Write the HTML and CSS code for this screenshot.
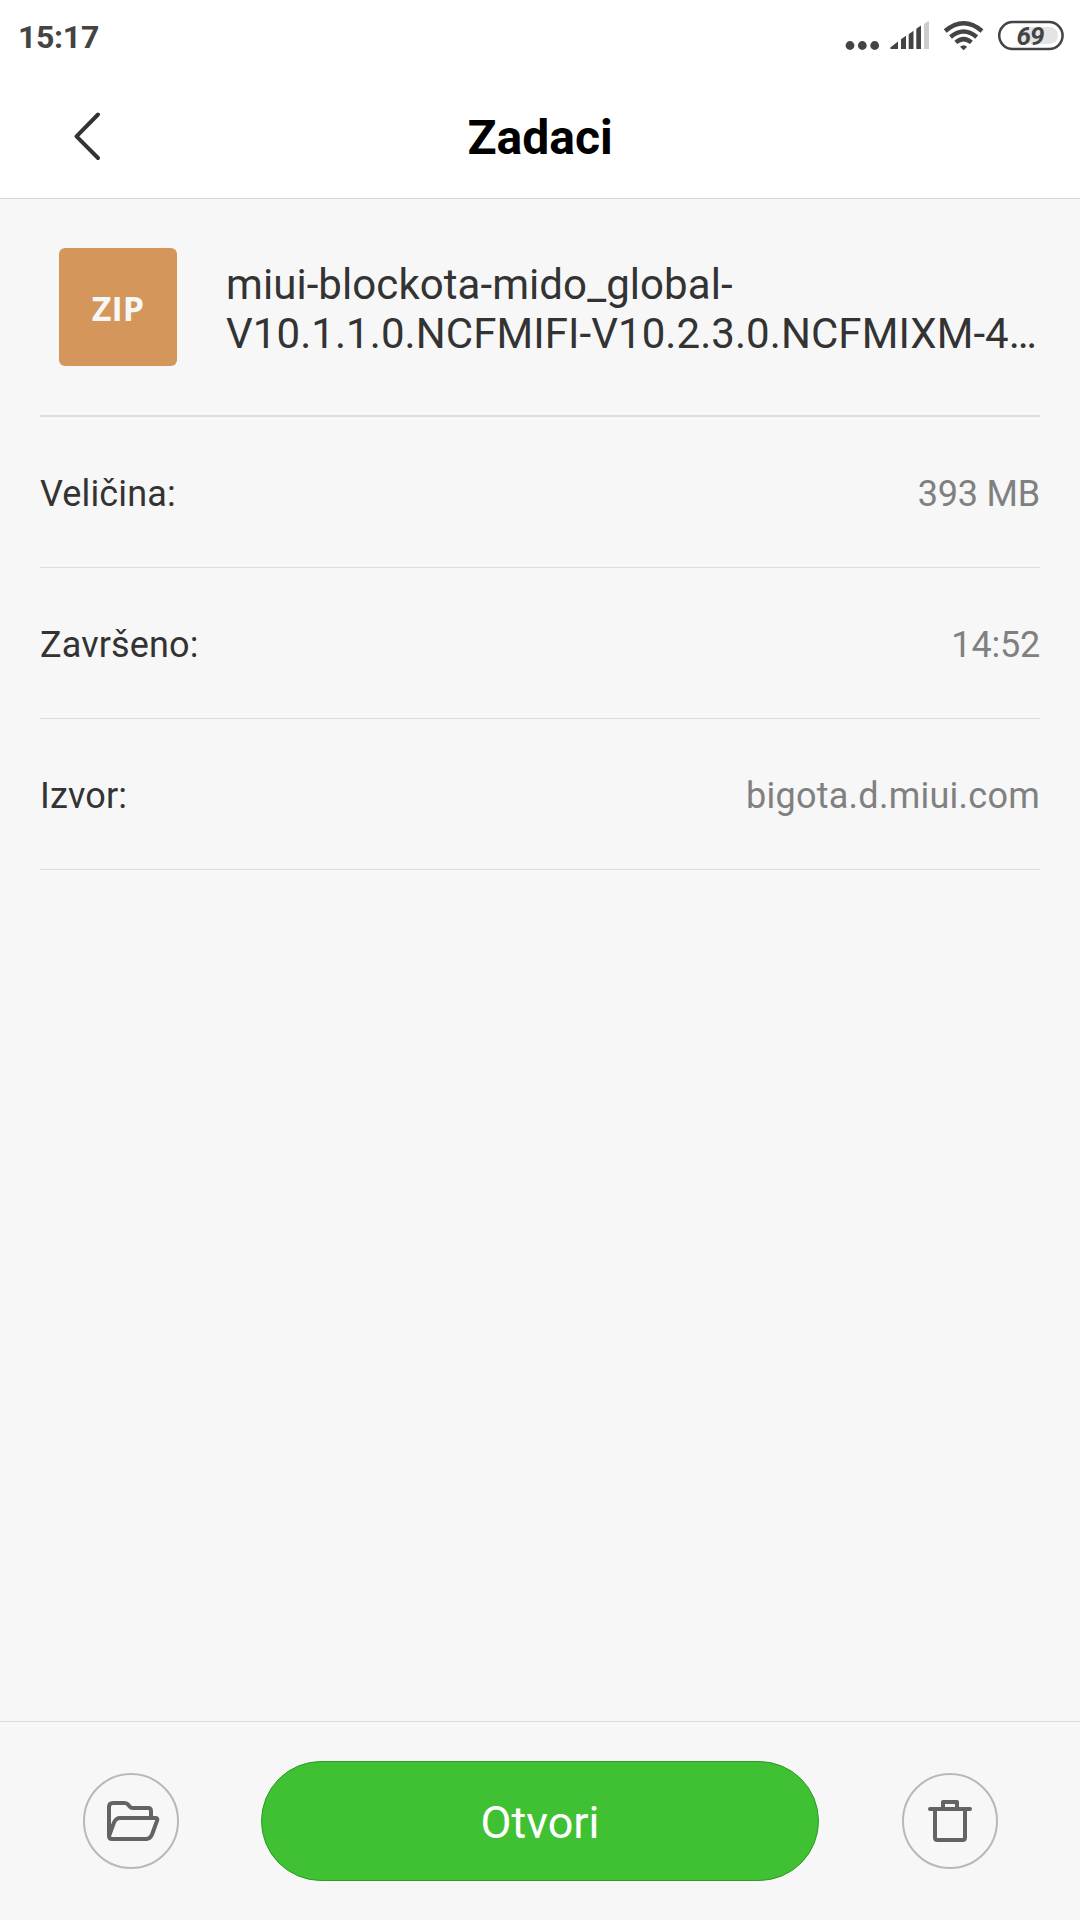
FILE: index.html
```
<!DOCTYPE html>
<html lang="bs">
<head>
    <meta charset="UTF-8">
    <meta name="viewport" content="width=device-width, initial-scale=1.0">
    <title>Zadaci</title>
    <link rel="stylesheet" href="styles.css">
</head>
<body>
    <!-- Status bar -->
    <div class="status-bar">
        <span class="clock">15:17</span>
        <svg class="status-icons" width="220" height="34" viewBox="845 18 220 34">
            <g fill="#444">
                <circle cx="850" cy="45.5" r="4.4"/>
                <circle cx="862.3" cy="45.5" r="4.4"/>
                <circle cx="874.7" cy="45.5" r="4.4"/>
                <path d="M890.3 47.5L898 41.5V49H891.2Q890 49 890.3 47.5z"/>
                <path d="M901 39.3L906 35.7V49H901z"/>
                <path d="M908.7 34.2L913.5 30.8V49H908.7z"/>
                <path d="M916.3 28.7L921 25.5V49H916.3z"/>
                <path fill="#ccc" d="M924 24L928 21.2Q929 21 929 22V49H924z"/>
                <path d="M960 46.8Q963.6 43.6 967.2 46.8L963.6 50.2z"/>
            </g>
            <g fill="none" stroke="#444" stroke-width="4.4">
                <path d="M945.2 31Q963.6 15.6 982 31"/>
                <path d="M950.5 37Q963.6 26 976.7 37"/>
                <path d="M955.8 42.4Q963.6 35.8 971.4 42.4"/>
            </g>
            <path fill="#e4e4e4" d="M1022 27H1049.5A8.5 8.5 0 0 1 1049.5 44H1022z"/>
            <rect x="999.2" y="22.1" width="63.4" height="27" rx="13.5" fill="none" stroke="#444" stroke-width="2.5"/>
            <text class="battery-level" x="1030" y="44.7" text-anchor="middle">69</text>
        </svg>
    </div>

    <header class="header">
        <a class="back" href="#">
            <svg width="28" height="50" viewBox="0 0 28 50">
                <path d="M24 3.5L2.5 25.3L24 47" fill="none" stroke="#333" stroke-width="4" stroke-linecap="round" stroke-linejoin="round"/>
            </svg>
        </a>
        <h1>Zadaci</h1>
    </header>

    <main class="content">
        <div class="file">
            <div class="file-icon">ZIP</div>
            <div class="file-name">miui-blockota-mido_global-<br>V10.1.1.0.NCFMIFI-V10.2.3.0.NCFMIXM-4…</div>
        </div>

        <div class="row">
            <span class="label">Veličina:</span>
            <span class="value">393 MB</span>
        </div>
        <div class="row">
            <span class="label">Završeno:</span>
            <span class="value">14:52</span>
        </div>
        <div class="row">
            <span class="label">Izvor:</span>
            <span class="value source">bigota.d.miui.com</span>
        </div>
    </main>

    <!-- Bottom actions -->
    <footer class="actions">
        <button class="btn-round">
            <svg width="50" height="46" viewBox="0 0 50 46">
                <g fill="none" stroke="#636363" stroke-width="4" stroke-linejoin="round">
                    <path d="M45 19V13Q45 10 42 10H27Q24.5 10 23.2 8L22.3 6.8Q21 5 18.5 5H7Q3 5 3 9V38"/>
                    <path d="M3 38L8 24.5Q10 20 14 20H49.5Q52 20 51.2 22.3L46 36.5Q44 41 40.5 41H6Q3 41 3 38z"/>
                </g>
            </svg>
        </button>
        <button class="btn-open">Otvori</button>
        <button class="btn-round">
            <svg width="44" height="46" viewBox="0 0 44 46">
                <g fill="none" stroke="#636363" stroke-width="4">
                    <path d="M2 11H42" stroke-linecap="round"/>
                    <path d="M15 10V4H29V10" stroke-linejoin="round"/>
                    <path d="M7 11V39.5Q7 42 9.5 42H34.5Q37 42 37 39.5V11"/>
                </g>
            </svg>
        </button>
    </footer>
</body>
</html>
```

FILE: styles.css
```
* {
    margin: 0;
    padding: 0;
    box-sizing: border-box;
}

body {
    font-family: Roboto, sans-serif;
    background: #f7f7f7;
    color: #333;
    height: 1920px;
    display: flex;
    flex-direction: column;
}

svg {
    display: block;
    overflow: visible;
}

.status-bar {
    height: 72px;
    padding: 2px 15px 0 18px;
    background: white;
    display: flex;
    align-items: center;
    justify-content: space-between;
}

.clock {
    color: #444;
    font-size: 32px;
    font-weight: 700;
    letter-spacing: -0.3px;
}

.status-icons {
    margin-bottom: 4px;
}

.battery-level {
    fill: #444;
    font-size: 26px;
    font-weight: 700;
    font-style: italic;
    letter-spacing: -1px;
}

.header {
    height: 127px;
    padding: 5px 74px 0;
    background: white;
    border-bottom: 1px solid #d8d8d8;
    display: grid;
    grid-template-columns: 28px 1fr 28px;
    align-items: center;
}

.back {
    padding-bottom: 4px;
}

.header h1 {
    color: #000;
    font-size: 48px;
    font-weight: 700;
    text-align: center;
}

.content {
    flex: 1;
    padding: 0 40px;
}

.file {
    height: 218px;
    padding: 49px 0 0 19px;
    border-bottom: 2px solid #dcdcdc;
    display: flex;
    gap: 49px;
}

.file-icon {
    width: 118px;
    height: 118px;
    padding-top: 1px;
    border-radius: 6px;
    background: #d4965b;
    color: #f7f7f7;
    font-family: 'Open Sans', sans-serif;
    font-size: 34px;
    font-weight: 700;
    display: flex;
    align-items: center;
    justify-content: center;
}

.file-name {
    padding-top: 12px;
    font-size: 42px;
    line-height: 49px;
    letter-spacing: 0.07px;
    white-space: nowrap;
}

.row {
    height: 151px;
    padding-top: 3px;
    border-bottom: 1px solid #dcdcdc;
    font-size: 36px;
    display: flex;
    align-items: center;
    justify-content: space-between;
}

.label {
    letter-spacing: 0.15px;
}

.value {
    color: #808080;
    letter-spacing: -0.2px;
}

.value.source {
    letter-spacing: 0.25px;
}

.actions {
    height: 199px;
    padding: 0 82px 0 83px;
    border-top: 1px solid #dcdcdc;
    display: flex;
    align-items: center;
    justify-content: space-between;
}

.btn-round {
    width: 96px;
    height: 96px;
    border: 2px solid #b8b8b8;
    border-radius: 50%;
    background: none;
    display: flex;
    align-items: center;
    justify-content: center;
}

.btn-open {
    width: 558px;
    height: 120px;
    margin-right: 1px;
    padding-top: 3px;
    border: 1px solid #2f9a27;
    border-radius: 60px;
    background: #3fc133;
    color: white;
    font-family: inherit;
    font-size: 45px;
}
```
